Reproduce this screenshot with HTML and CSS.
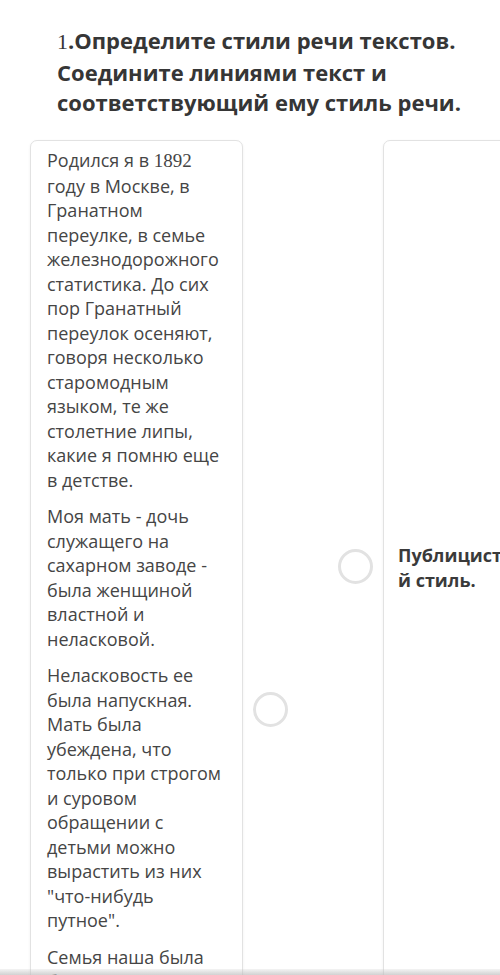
FILE: index.html
```html
<!DOCTYPE html>
<html lang="ru">
<head>
<meta charset="utf-8">
<link rel="stylesheet" href="styles.css">
</head>
<body>
<div class="page">
  <h1 class="title"><span class="num">1</span>.Определите стили речи текстов. Соедините линиями текст и соответствующий ему стиль речи.</h1>
  <div class="match">
    <div class="card card-left">
      <p>Родился я в <span class="num">1892</span> году в Москве, в Гранатном переулке, в семье железнодорожного статистика. До сих пор Гранатный переулок осеняют, говоря несколько старомодным языком, те же столетние липы, какие я помню еще в детстве.</p>
      <p>Моя мать - дочь служащего на сахарном заводе - была женщиной властной и неласковой.</p>
      <p>Неласковость ее была напускная. Мать была убеждена, что только при строгом и суровом обращении с детьми можно вырастить из них "что-нибудь путное".</p>
      <p>Семья наша была большая и веселая.</p>
    </div>
    <div class="links">
      <span class="dot dot-right"></span>
      <span class="dot dot-left"></span>
    </div>
    <div class="card card-right">
      <p class="style-name">Публицистический стиль.</p>
    </div>
  </div>
  <div class="bottom-bar"></div>
</div>
</body>
</html>
```

FILE: styles.css
```css
html, body {
  margin: 0;
  padding: 0;
  background: #ffffff;
  overflow: hidden;
}
body {
  width: 500px;
  height: 975px;
  font-family: "Open Sans", "Noto Sans", sans-serif;
  color: #3a3a3a;
}
.page {
  position: relative;
  height: 975px;
  overflow: hidden;
}
.num {
  font-family: "Liberation Serif", "DejaVu Serif", serif;
  font-weight: normal;
}
.title {
  margin: 0;
  padding: 25px 20px 0 57px;
  font-size: 22px;
  line-height: 30px;
  font-weight: 700;
  color: #363636;
}
.title .num {
  font-size: 22px;
}
.match {
  display: grid;
  grid-template-columns: 213px 140px 213px;
  margin-top: 23px;
  margin-left: 30px;
  width: 566px;
}
.card {
  background: #fff;
  border: 1px solid #e2e2e2;
  border-radius: 7px;
  box-shadow: 0 1px 3px rgba(0,0,0,0.06);
  min-height: 900px;
}
.card-left {
  padding: 7px 15px 0 16px;
}
.card-left p {
  margin: 0 0 12px;
  font-size: 18px;
  line-height: 24.5px;
  color: #454545;
}
.card-left .num {
  font-size: 19px;
}
.links {
  position: relative;
}
.dot {
  position: absolute;
  width: 29px;
  height: 29px;
  border: 3px solid #e2e2e2;
  border-radius: 50%;
  background: #fff;
}
.dot-right {
  left: 95px;
  top: 409px;
}
.dot-left {
  left: 10px;
  top: 552px;
}
.card-right {
  padding: 0 14px;
}
.style-name {
  margin: 402px 0 0;
  width: 180px;
  font-size: 18px;
  line-height: 25px;
  font-weight: 700;
  color: #3a3a3a;
  word-break: break-all;
}
.bottom-bar {
  position: absolute;
  left: 0;
  right: 0;
  bottom: 0;
  height: 6px;
  background: linear-gradient(to bottom, rgba(200,200,200,0.2), rgba(190,190,190,0.7));
}
```
